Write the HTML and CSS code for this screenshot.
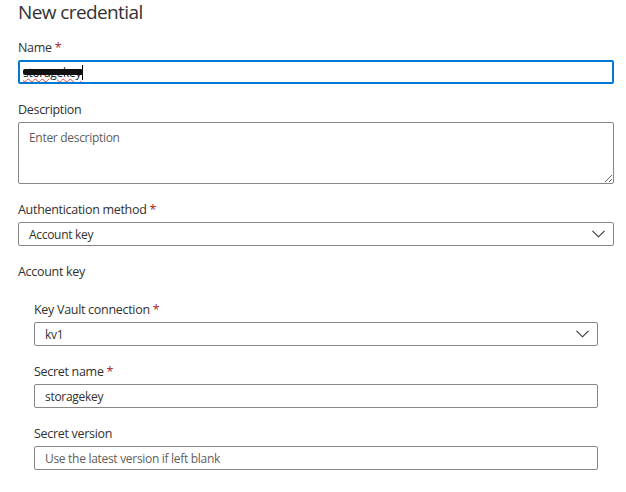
FILE: index.html
```html
<!DOCTYPE html>
<html lang="en">
<head>
<meta charset="utf-8">
<title>New credential</title>
<link rel="stylesheet" href="styles.css">
</head>
<body>
<div class="panel">
  <h1 class="title">New credential</h1>

  <div class="field">
    <label class="label">Name <span class="req">*</span></label>
    <div class="input focused">
      <span class="redacted">storagekey<span class="scribble"></span></span><span class="caret"></span>
    </div>
  </div>

  <div class="field">
    <label class="label">Description</label>
    <textarea class="textarea" placeholder="Enter description"></textarea>
  </div>

  <div class="field">
    <label class="label">Authentication method <span class="req">*</span></label>
    <div class="input select">
      <span class="value">Account key</span>
      <svg class="chev" width="13" height="8" viewBox="0 0 13 8"><path d="M0.5 0.8 L6.5 6.8 L12.5 0.8" fill="none" stroke="#323130" stroke-width="1.1"/></svg>
    </div>
  </div>

  <div class="section-label">Account key</div>

  <div class="nested">
    <div class="field">
      <label class="label">Key Vault connection <span class="req">*</span></label>
      <div class="input select">
        <span class="value">kv1</span>
        <svg class="chev" width="13" height="8" viewBox="0 0 13 8"><path d="M0.5 0.8 L6.5 6.8 L12.5 0.8" fill="none" stroke="#323130" stroke-width="1.1"/></svg>
      </div>
    </div>

    <div class="field">
      <label class="label">Secret name <span class="req">*</span></label>
      <div class="input"><span class="value">storagekey</span></div>
    </div>

    <div class="field">
      <label class="label">Secret version</label>
      <div class="input"><span class="placeholder">Use the latest version if left blank</span></div>
    </div>
  </div>
</div>
</body>
</html>
```
FILE: styles.css
```css
* { box-sizing: border-box; }
html, body { margin: 0; padding: 0; background: #fff; }
body {
  font-family: "Open Sans", "Noto Sans", sans-serif;
  color: #323130;
}
.panel {
  width: 614px;
  padding-left: 18px;
  display: flex;
  flex-direction: column;
}
.title {
  margin: 0 0 13px 0;
  font-size: 19px;
  font-weight: 400;
  line-height: 24px;
  letter-spacing: -0.6px;
}
.field {
  display: flex;
  flex-direction: column;
  margin-bottom: 15px;
}
.label {
  font-size: 12.5px;
  line-height: 18px;
  height: 20px;
  padding-top: 2px;
  margin-bottom: 3px;
  font-weight: 400;
  letter-spacing: -0.3px;
}
.req { color: #a4262c; }
.input {
  position: relative;
  height: 24px;
  border: 1px solid #8a8886;
  border-radius: 2px;
  display: flex;
  align-items: center;
  padding: 0 10px;
  font-size: 12px;
  letter-spacing: -0.3px;
}
.input.focused {
  border: 2px solid #0078d4;
  padding-left: 3px;
}
.select { justify-content: space-between; padding-right: 8px; }
.value { color: #323130; }
.placeholder { color: #605e5c; }
.chev { display: block; }
.textarea {
  height: 62px;
  border: 1px solid #8a8886;
  border-radius: 2px;
  padding: 6px 10px;
  font-family: "Open Sans", "Noto Sans", sans-serif;
  font-size: 12px;
  letter-spacing: -0.3px;
  color: #323130;
  resize: vertical;
  outline: none;
}
.textarea::placeholder { color: #605e5c; }
.redacted {
  position: relative;
  color: #222;
  text-decoration: underline wavy #e04040;
  text-decoration-thickness: 1px;
  font-size: 12px;
}
.scribble {
  position: absolute;
  left: 0;
  right: -2px;
  top: 5px;
  height: 6px;
  background: #111;
  border-radius: 2px;
}
.caret {
  width: 1px;
  height: 15px;
  background: #000;
  margin-left: 1px;
}
.section-label {
  font-size: 12.5px;
  line-height: 18px;
  height: 20px;
  padding-top: 2px;
  letter-spacing: -0.3px;
  margin-bottom: 18px;
}
.nested {
  padding: 0 16px;
  display: flex;
  flex-direction: column;
}
```
